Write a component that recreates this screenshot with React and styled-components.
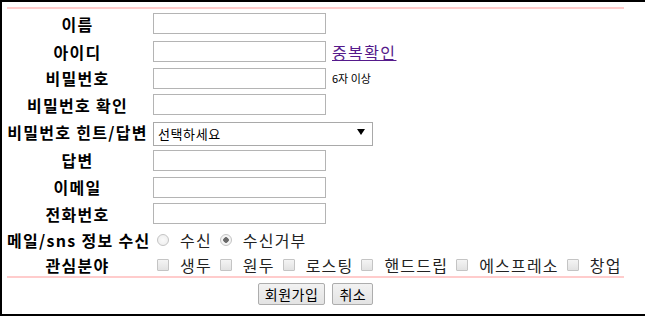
import React from "react"
import styled, { createGlobalStyle } from "styled-components"

const Global = createGlobalStyle`
  body {
    margin: 0;
    background: #fff;
    font-family: "Noto Sans CJK KR", "Noto Sans", sans-serif;
    color: #000;
  }
`

const Frame = styled.div`
  box-sizing: border-box;
  height: 316px;
  border: 2px solid #000;
  border-right: none;
  padding: 5px 5px 0;
`
const Form = styled.div`
  width: 617px;
  border-top: 2px solid #ffcccc;
  border-bottom: 2px solid #ffcccc;
`
const Row = styled.div`
  display: flex;
  align-items: center;
  height: ${(p) => p.h}px;
`
const Label = styled.div`
  width: 141px;
  flex: none;
  text-align: center;
  font-size: 16px;
  font-weight: bold;
  letter-spacing: 1.3px;
  white-space: nowrap;
  line-height: 1;
`
const Field = styled.div`
  display: flex;
  align-items: center;
  margin-left: 5px;
`
const TextInput = styled.input`
  box-sizing: border-box;
  width: 173px;
  height: 21px;
  border: 1px solid #b4b4b4;
  padding: 0 2px;
  margin: 0;
  outline: none;
`
const Link = styled.a`
  margin-left: 6px;
  font-size: 16px;
  letter-spacing: 1.4px;
  color: #551a8b;
  text-decoration: underline;
  line-height: 1;
`
const Hint = styled.span`
  margin-left: 6px;
  font-size: 11px;
  color: #000;
`
const SelectWrap = styled.div`
  position: relative;
  width: 220px;
  height: 24px;
`
const Select = styled.select`
  box-sizing: border-box;
  appearance: none;
  width: 100%;
  height: 100%;
  border: 1px solid #a9a9a9;
  border-radius: 0;
  background: #fff;
  padding: 0 0 0 4px;
  font-family: "Noto Sans CJK KR", sans-serif;
  font-size: 13px;
  letter-spacing: 0.6px;
  color: #000;
  margin: 0;
`
const Arrow = styled.svg`
  position: absolute;
  right: 8px;
  top: 9px;
  pointer-events: none;
`
const Options = styled.div`
  display: flex;
  flex: none;
  align-items: center;
  margin-left: 9px;
`
const Choice = styled.label`
  display: flex;
  flex: none;
  align-items: center;
  margin-right: 8px;
  font-size: 16px;
  letter-spacing: 1.2px;
  white-space: nowrap;
  color: #222;
  line-height: 1;
  &:last-child {
    margin-right: 0;
  }
`
const Radio = styled.span`
  box-sizing: border-box;
  flex: none;
  width: 12px;
  height: 12px;
  margin-right: 11px;
  border-radius: 50%;
  border: 1px solid #c4c4c4;
  background: radial-gradient(circle, ${(p) => (p.checked ? "#6a6a6a 0 2.5px, #f4f4f4 3px" : "#fafafa 0, #ececec 100%")});
`
const Check = styled.span`
  box-sizing: border-box;
  flex: none;
  width: 12px;
  height: 12px;
  margin-right: 11px;
  border: 1px solid #c4c4c4;
  border-radius: 1px;
  background: linear-gradient(#f4f4f4, #e2e2e2);
`
const Buttons = styled.div`
  width: 617px;
  display: flex;
  justify-content: center;
  gap: 7px;
  margin-top: 5px;
`
const Button = styled.button`
  height: 22px;
  padding: 0 6px;
  border: 1px solid #adadad;
  border-radius: 2px;
  background: linear-gradient(#f2f2f2, #e3e3e3);
  font-family: "Noto Sans CJK KR", sans-serif;
  font-size: 14px;
  letter-spacing: 0.5px;
  line-height: 1;
  color: #000;
`

const interests = ["생두", "원두", "로스팅", "핸드드립", "에스프레소", "창업"]

export default function App() {
  return (
    <Frame>
      <Global />
      <Form>
        <Row h={29}>
          <Label>이름</Label>
          <Field><TextInput /></Field>
        </Row>
        <Row h={27}>
          <Label>아이디</Label>
          <Field>
            <TextInput />
            <Link href="#">중복확인</Link>
          </Field>
        </Row>
        <Row h={26}>
          <Label>비밀번호</Label>
          <Field>
            <TextInput type="password" />
            <Hint>6자 이상</Hint>
          </Field>
        </Row>
        <Row h={27}>
          <Label>비밀번호 확인</Label>
          <Field><TextInput type="password" /></Field>
        </Row>
        <Row h={28}>
          <Label>비밀번호 힌트/답변</Label>
          <Field>
            <SelectWrap>
              <Select defaultValue="">
                <option value="">선택하세요</option>
              </Select>
              <Arrow width="8" height="6" viewBox="0 0 8 6">
                <path d="M0 0h8L4 6z" fill="#000" />
              </Arrow>
            </SelectWrap>
          </Field>
        </Row>
        <Row h={28}>
          <Label>답변</Label>
          <Field><TextInput /></Field>
        </Row>
        <Row h={26}>
          <Label>이메일</Label>
          <Field><TextInput /></Field>
        </Row>
        <Row h={27}>
          <Label>전화번호</Label>
          <Field><TextInput /></Field>
        </Row>
        <Row h={26}>
          <Label>메일/sns 정보 수신</Label>
          <Options>
            <Choice><Radio />수신</Choice>
            <Choice><Radio checked />수신거부</Choice>
          </Options>
        </Row>
        <Row h={23}>
          <Label>관심분야</Label>
          <Options>
            {interests.map((item) => (
              <Choice key={item}><Check />{item}</Choice>
            ))}
          </Options>
        </Row>
      </Form>
      <Buttons>
        <Button>회원가입</Button>
        <Button>취소</Button>
      </Buttons>
    </Frame>
  )
}
